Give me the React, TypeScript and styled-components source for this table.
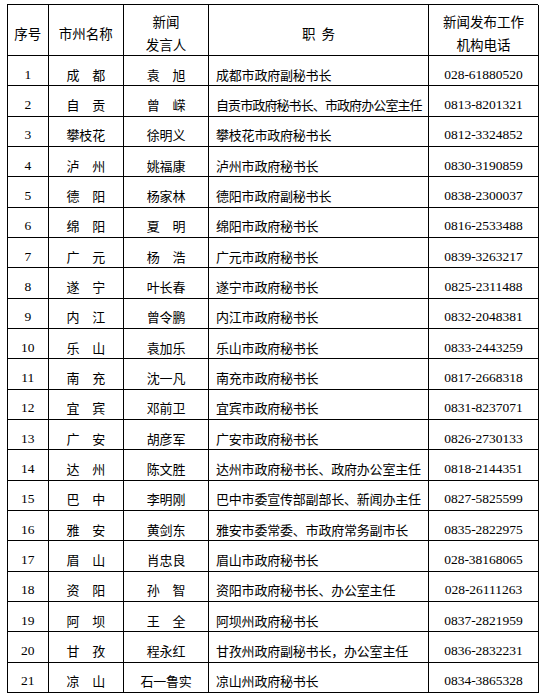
import styled, { createGlobalStyle } from "styled-components";

const GlobalStyle = createGlobalStyle`
  html, body {
    margin: 0;
    padding: 0;
    background: #ffffff;
  }
  body {
    font-family: "Liberation Serif", "Noto Sans CJK SC", serif;
    color: #000000;
  }
`;

type Row = {
  no: number;
  city: string;
  name: string;
  duty: string;
  phone: string;
  tight?: boolean;
};

const rows: Row[] = [
  { no: 1, city: "成　都", name: "袁　旭", duty: "成都市政府副秘书长", phone: "028-61880520" },
  { no: 2, city: "自　贡", name: "曾　嵘", duty: "自贡市政府秘书长、市政府办公室主任", phone: "0813-8201321", tight: true },
  { no: 3, city: "攀枝花", name: "徐明义", duty: "攀枝花市政府秘书长", phone: "0812-3324852" },
  { no: 4, city: "泸　州", name: "姚福康", duty: "泸州市政府秘书长", phone: "0830-3190859" },
  { no: 5, city: "德　阳", name: "杨家林", duty: "德阳市政府副秘书长", phone: "0838-2300037" },
  { no: 6, city: "绵　阳", name: "夏　明", duty: "绵阳市政府秘书长", phone: "0816-2533488" },
  { no: 7, city: "广　元", name: "杨　浩", duty: "广元市政府秘书长", phone: "0839-3263217" },
  { no: 8, city: "遂　宁", name: "叶长春", duty: "遂宁市政府秘书长", phone: "0825-2311488" },
  { no: 9, city: "内　江", name: "曾令鹏", duty: "内江市政府秘书长", phone: "0832-2048381" },
  { no: 10, city: "乐　山", name: "袁加乐", duty: "乐山市政府秘书长", phone: "0833-2443259" },
  { no: 11, city: "南　充", name: "沈一凡", duty: "南充市政府秘书长", phone: "0817-2668318" },
  { no: 12, city: "宜　宾", name: "邓前卫", duty: "宜宾市政府秘书长", phone: "0831-8237071" },
  { no: 13, city: "广　安", name: "胡彦军", duty: "广安市政府秘书长", phone: "0826-2730133" },
  { no: 14, city: "达　州", name: "陈文胜", duty: "达州市政府秘书长、政府办公室主任", phone: "0818-2144351" },
  { no: 15, city: "巴　中", name: "李明刚", duty: "巴中市委宣传部副部长、新闻办主任", phone: "0827-5825599" },
  { no: 16, city: "雅　安", name: "黄剑东", duty: "雅安市委常委、市政府常务副市长", phone: "0835-2822975" },
  { no: 17, city: "眉　山", name: "肖忠良", duty: "眉山市政府秘书长", phone: "028-38168065" },
  { no: 18, city: "资　阳", name: "孙　智", duty: "资阳市政府秘书长、办公室主任", phone: "028-26111263" },
  { no: 19, city: "阿　坝", name: "王　全", duty: "阿坝州政府秘书长", phone: "0837-2821959" },
  { no: 20, city: "甘　孜", name: "程永红", duty: "甘孜州政府副秘书长，办公室主任", phone: "0836-2832231" },
  { no: 21, city: "凉　山", name: "石一鲁实", duty: "凉山州政府秘书长", phone: "0834-3865328" },
];

const Page = styled.div`
  padding: 4px 0 0 7px;
`;

const Grid = styled.div`
  display: grid;
  grid-template-columns: 40.5px 75.5px 85px 220px 110px;
  grid-template-rows: 51px repeat(21, 30.33px);
  width: 531px;
  border-top: 1px solid #000;
  border-left: 1px solid #000;
  box-sizing: border-box;
`;

const Cell = styled.div<{ $left?: boolean; $head?: boolean }>`
  display: flex;
  align-items: center;
  justify-content: ${(p) => (p.$left ? "flex-start" : "center")};
  padding: ${(p) => (p.$head ? "6px 0 0" : p.$left ? "8px 0 0 7px" : "8px 0 0")};
  border-right: 1px solid #000;
  border-bottom: 1px solid #000;
  box-sizing: border-box;
  overflow: hidden;
  white-space: nowrap;
`;

const HeadText = styled.div`
  font-family: "Noto Sans CJK SC", sans-serif;
  font-size: 13.5px;
  line-height: 23px;
  text-align: center;
`;

const Num = styled.span`
  font-family: "Liberation Serif", serif;
  font-size: 13.5px;
  line-height: 16px;
`;

const Han = styled.span<{ $tight?: boolean }>`
  font-family: "Noto Sans CJK SC", sans-serif;
  font-size: 13px;
  line-height: 16px;
  letter-spacing: ${(p) => (p.$tight ? "-0.9px" : "-0.2px")};
`;

const App = () => {
  return (
    <Page>
      <GlobalStyle />
      <Grid>
        <Cell $head>
          <HeadText>序号</HeadText>
        </Cell>
        <Cell $head>
          <HeadText>市州名称</HeadText>
        </Cell>
        <Cell $head>
          <HeadText>
            新闻
            <br />
            发言人
          </HeadText>
        </Cell>
        <Cell $head>
          <HeadText>职&nbsp;&nbsp;务</HeadText>
        </Cell>
        <Cell $head>
          <HeadText>
            新闻发布工作
            <br />
            机构电话
          </HeadText>
        </Cell>
        {rows.map((r) => (
          <Row key={r.no} row={r} />
        ))}
      </Grid>
    </Page>
  );
};

const Row = ({ row }: { row: Row }) => (
  <>
    <Cell>
      <Num>{row.no}</Num>
    </Cell>
    <Cell>
      <Han>{row.city}</Han>
    </Cell>
    <Cell>
      <Han>{row.name}</Han>
    </Cell>
    <Cell $left>
      <Han $tight={row.tight}>{row.duty}</Han>
    </Cell>
    <Cell>
      <Num>{row.phone}</Num>
    </Cell>
  </>
);

export default App;
